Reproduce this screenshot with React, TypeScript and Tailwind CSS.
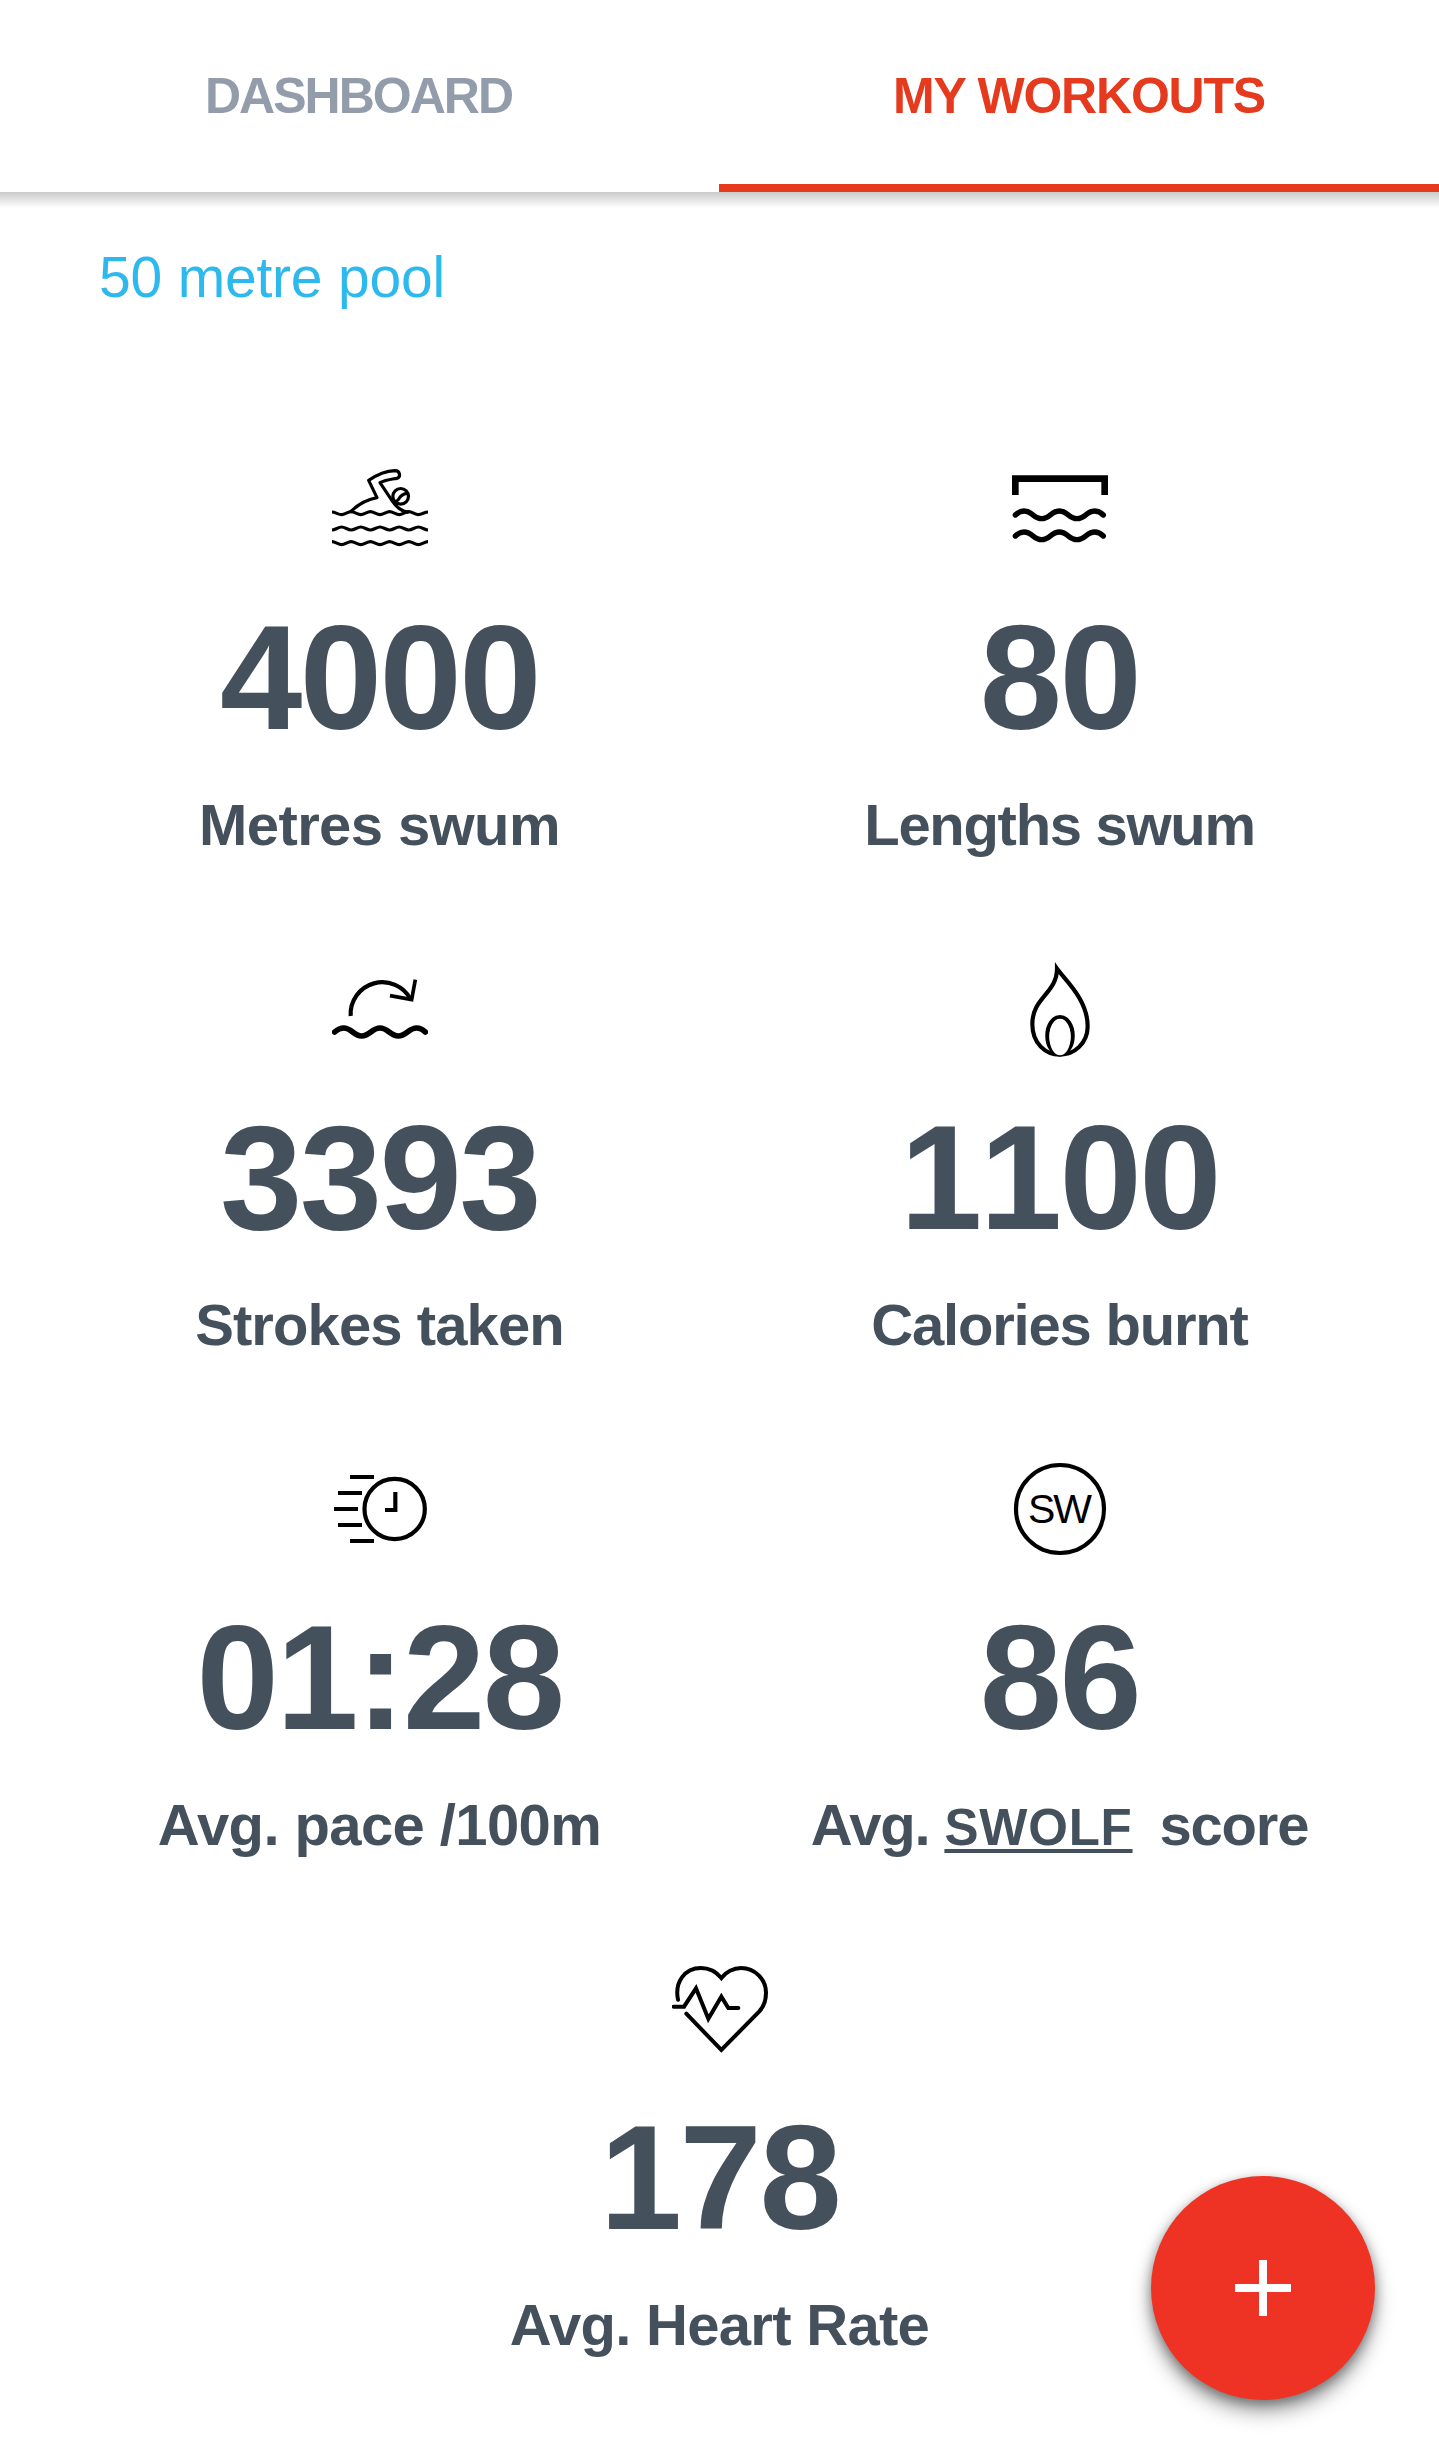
import type { ReactNode } from "react";

function Icon({ children }: { children: ReactNode }) {
  return (
    <svg
      className="block size-24"
      viewBox="63 36 288 288"
      fill="none"
      stroke="#000"
      strokeWidth="12.500"
      aria-hidden="true"
    >
      {children}
    </svg>
  );
}

const swimmer = (
  <Icon>
    <g strokeWidth="9.500" strokeLinejoin="round">
      <path d="M63 186c10 0 19 8 28.8 8s18.8-9 28.8-9 18.8 9 28.8 9 18.8-9 28.8-9 18.8 9 28.8 9 18.8-9 28.8-9 18.8 9 28.8 9 18.8-9 28.8-9 18.8 9 28.8 9 19-8 28.8-8" />
      <path d="M63 240c10 0 19-9 28.8-9s18.8 9 28.8 9 18.8-9 28.8-9 18.8 9 28.8 9 18.8-9 28.8-9 18.8 9 28.8 9 18.8-9 28.8-9 18.8 9 28.8 9 18.8-9 28.8-9 19 9 28.8 9" />
      <path d="M63 275c10 0 19 9 28.8 9s18.8-9 28.8-9 18.8 9 28.8 9 18.8-9 28.8-9 18.8 9 28.8 9 18.8-9 28.8-9 18.8 9 28.8 9 18.8-9 28.8-9 18.8 9 28.8 9 19-9 28.8-9" />
      <path d="M117 187C138 166 165 149 198 143L173 91C198 74 228 63 252 62C268 62 270 82 257 85C240 88 222 90 207 98L243 152C255 171 270 184 293 187" />
      <circle cx="269" cy="139" r="23.500" />
      <path d="M246 154C272 158 256 132 290 130" />
    </g>
  </Icon>
);

const pool = (
  <Icon>
    <path strokeWidth="20" d="M73 135V86H341V135" />
    <g strokeWidth="16" strokeLinecap="round">
      <path d="M73 195C81 187 90 183 99 183C123 183 128 206 152 206S181 183 205 183S234 206 258 206S287 183 311 183C320 183 329 187 337 195" />
      <path d="M73 258C81 250 90 246 99 246C123 246 128 269 152 269S181 246 205 246S234 269 258 269S287 246 311 246C320 246 329 250 337 258" />
    </g>
  </Icon>
);

const stroke = (
  <Icon>
    <path d="M119 198A95.500 95.500 0 0 1 299 148" />
    <path strokeWidth="11" d="M237 137L302 149L313 89" />
    <path
      strokeWidth="17"
      strokeLinecap="round"
      d="M71 246C80 238 89 234 98 234C122 234 128 258 152 258S183 234 207 234S238 258 262 258S293 234 317 234C326 234 335 238 343 246"
    />
  </Icon>
);

const flame = (
  <Icon>
    <path
      strokeMiterlimit="10"
      d="M198 56C220 88 290 147 290 229C290 280 250 314 207 314C163 314 124 280 124 222C124 142 198 130 198 56Z"
    />
    <ellipse cx="207" cy="257" rx="38" ry="56" />
    <ellipse cx="207" cy="261" rx="32" ry="55" fill="#fff" stroke="none" />
  </Icon>
);

const pace = (
  <Icon>
    <circle cx="251" cy="177" r="90.500" />
    <path d="M117 81H189M81 129H153M69 177H141M81 225H153M117 273H189M253 126V180H222" />
  </Icon>
);

const swolf = (
  <Icon>
    <circle cx="207" cy="177" r="132" />
    <text
      x="111"
      y="218"
      fontSize="123"
      textLength="192"
      fill="#000"
      stroke="none"
      className="font-['Liberation_Sans',Arial,sans-serif] font-normal"
    >
      SW
    </text>
  </Icon>
);

const heart = (
  <Icon>
    <g strokeWidth="12" strokeLinecap="round">
      <path d="M81 149C70 95 102 54 150 54C175 54 196 66 211 84C224 66 248 54 270 54C312 54 345 88 345 128C345 150 338 170 325 184L211 300L106 191" />
      <path d="M68 170H99L135 115L172 206L211 140L232 174H262" />
    </g>
  </Icon>
);

const stats: { icon: ReactNode; value: string; label: ReactNode; spacing: string }[] = [
  { icon: swimmer, value: "4000", label: "Metres swum", spacing: "tracking-[-0.6px]" },
  { icon: pool, value: "80", label: "Lengths swum", spacing: "tracking-[-1.3px]" },
  { icon: stroke, value: "3393", label: "Strokes taken", spacing: "tracking-[-0.9px]" },
  { icon: flame, value: "1100", label: "Calories burnt", spacing: "tracking-[-1.2px]" },
  { icon: pace, value: "01:28", label: "Avg. pace /100m", spacing: "tracking-[-0.6px]" },
  {
    icon: swolf,
    value: "86",
    label: (
      <>
        Avg.{" "}
        <span className="mr-[12px] text-[51px] leading-none tracking-[0.8px] underline decoration-4 underline-offset-4 [text-decoration-skip-ink:none]">
          SWOLF
        </span>{" "}
        score
      </>
    ),
    spacing: "tracking-[-1.2px]",
  },
  { icon: heart, value: "178", label: "Avg. Heart Rate", spacing: "tracking-[-0.7px]" },
];

export default function App() {
  return (
    <div className="relative h-[2464px] w-[1439px] overflow-hidden bg-white font-['Liberation_Sans',Arial,sans-serif]">
      <nav className="flex h-48 text-center text-[50px] leading-[192px] font-bold">
        <a className="w-[719px] pr-[2px] tracking-[-2px] text-[#929cab]">DASHBOARD</a>
        <a className="h-48 flex-1 border-b-8 border-[#e53a1d] tracking-[-1.2px] text-[#e53a1d]">
          MY WORKOUTS
        </a>
      </nav>
      <div className="h-4 bg-linear-to-b from-[#cbcbcb] to-white" />

      <main>
        <p className="pt-[29px] pl-[99px] text-[57px] leading-[80px] tracking-[-0.2px] text-[#2db9ee]">
          50 metre pool
        </p>
        <div className="mt-[145px] flex flex-wrap justify-center px-[39px] text-[#44515c]">
          {stats.map((stat) => (
            <section
              key={stat.value}
              className="flex h-[500px] w-[680px] flex-col items-center font-bold whitespace-nowrap"
            >
              {stat.icon}
              <p className="mt-[46px] text-[148px] leading-[148px] tracking-[-2.5px] [font-kerning:none]">
                {stat.value}
              </p>
              <p className={`mt-[41px] h-16 text-[58px] leading-[64px] ${stat.spacing}`}>{stat.label}</p>
            </section>
          ))}
        </div>
      </main>

      <button
        aria-label="Add workout"
        className="absolute top-[2176px] left-[1151px] flex size-56 items-center justify-center rounded-full bg-[#ee3325] shadow-[0_12px_20px_rgba(0,0,0,0.35),0_4px_12px_rgba(0,0,0,0.35)]"
      >
        <svg className="size-14" viewBox="0 0 56 56" stroke="#fff" strokeWidth="8">
          <path d="M28 0V56M0 28H56" />
        </svg>
      </button>
    </div>
  );
}
